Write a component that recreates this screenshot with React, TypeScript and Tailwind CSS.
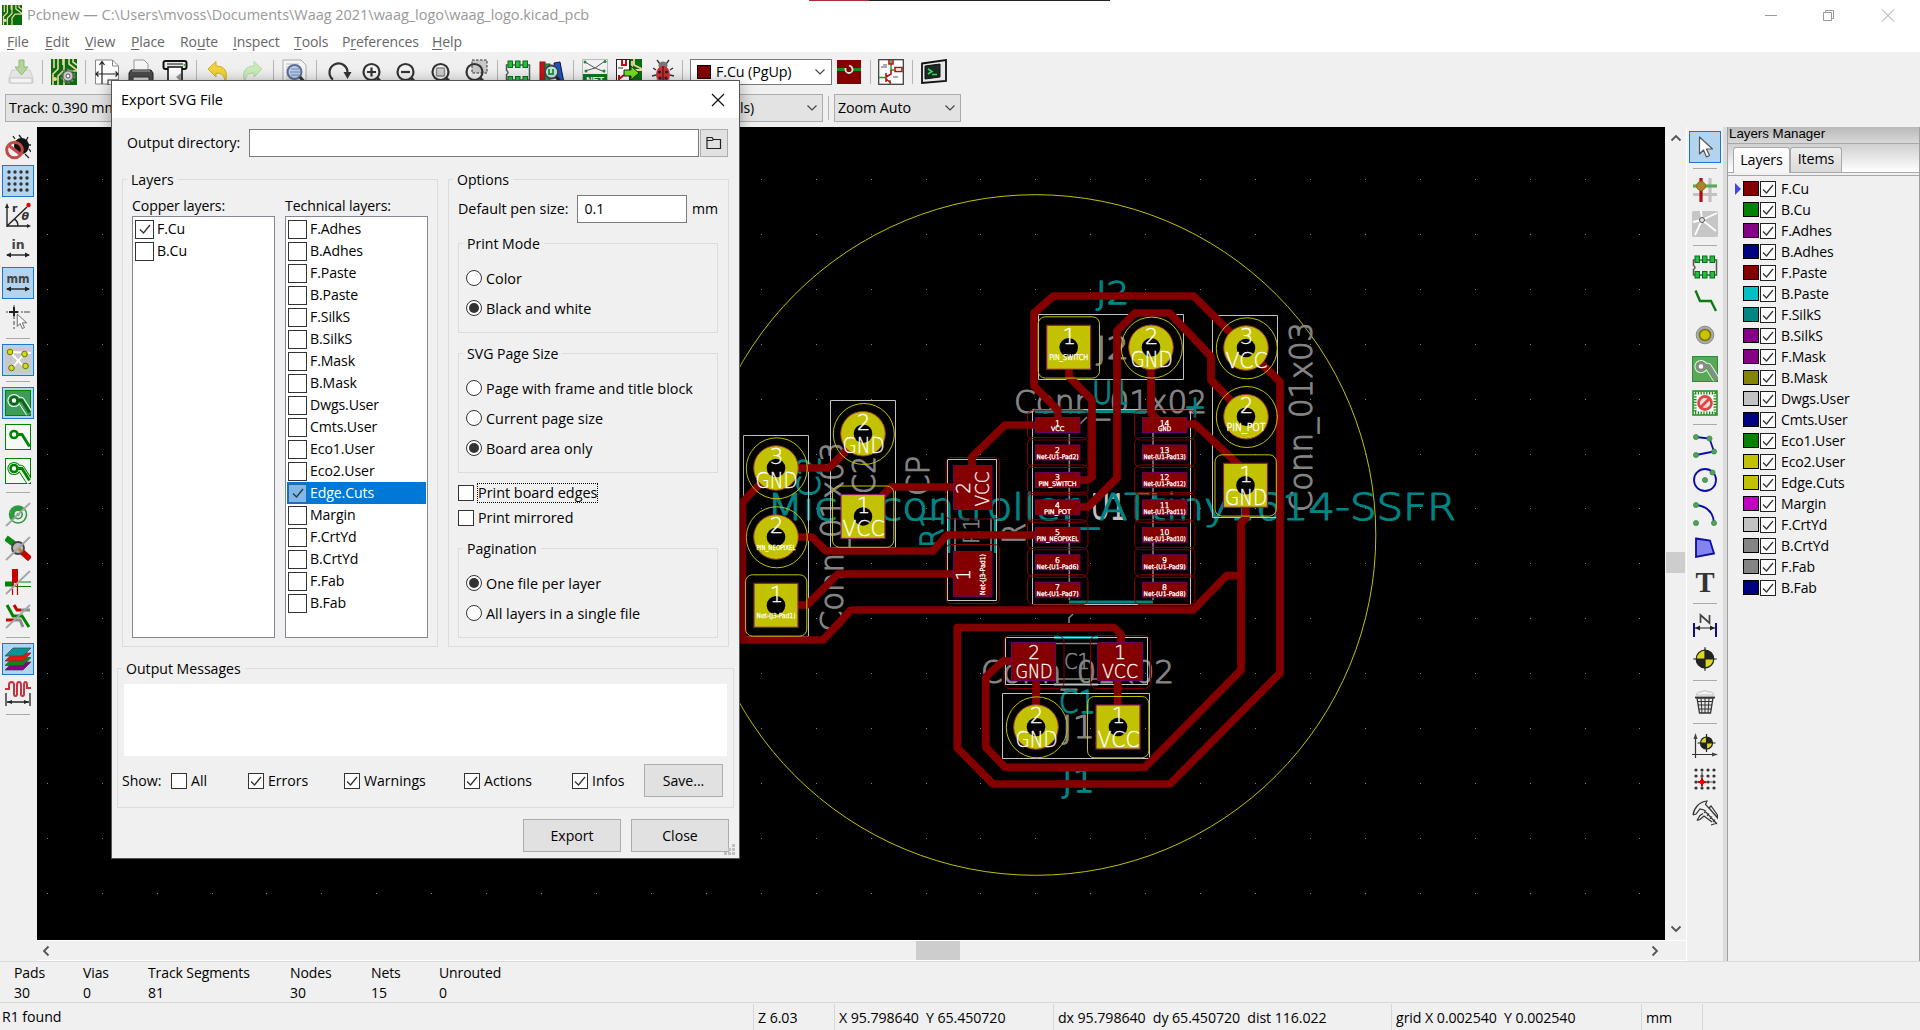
import React from "react";

type Kids = { children?: React.ReactNode };

/* ---------- icon helpers ---------- */
const Ic = ({ children }: Kids) => (
  <svg viewBox="0 0 26 26" className="block h-[26px] w-[26px] shrink-0" fill="none">
    {children}
  </svg>
);
const G = "#008400";

const IcSave = () => (
  <Ic>
    <path d="M4 11h18l3 8v5H1v-5z" fill="#e4e4e4" stroke="#cfcfcf" />
    <path d="M2 19h22v5H2z" fill="#f3f3f3" stroke="#c6c6c6" />
    <path d="M11 1h5v7h4l-6.500 8-6.500-8h4z" fill="#b4d49a" stroke="#94b878" />
  </Ic>
);
const Board = () => (
  <>
    <rect width="26" height="26" fill="#0b6b0f" />
    <path d="M2 26V15l5-5V0M7 26V17l6-6V0M12 0v6M18 0v5l8 6M22 0v3l4 3M13 26v-9l4-5h9M3 0v9" stroke="#e8d9a0" strokeWidth="1.6" />
    <circle cx="4" cy="20" r="2" fill="#e8d9a0" />
  </>
);
const IcBoard = () => (
  <Ic>
    <Board />
    <circle cx="17" cy="17" r="6.500" stroke="#777" strokeWidth="2" strokeDasharray="2.400 1.700" />
    <circle cx="17" cy="17" r="5" fill="#c9c9c9" stroke="#666" />
    <circle cx="17" cy="17" r="2" fill="#fff" stroke="#555" />
  </Ic>
);
const IcPage = () => (
  <Ic>
    <path d="M1.500 1h17l6 6v18h-23z" fill="#fff" stroke="#888" />
    <path d="M18.500 1v6h6" stroke="#888" />
    <path d="M8 3v22M2 15h22M5.500 6L8 2.500 10.500 6M4.500 12.500L2 15l2.500 2.500M21.500 12.500L24 15l-2.500 2.500" stroke="#222" strokeWidth="1.2" />
    <rect x="14" y="21" width="10" height="5" fill="#fff" stroke="#222" />
  </Ic>
);
const IcPrint = () => (
  <Ic>
    <path d="M6 1h10l4 4v8H6z" fill="#f5f5f5" stroke="#999" />
    <path d="M3 11h20l2 3v9H1v-9z" fill="#4b4b4b" stroke="#222" />
    <path d="M4 12h18" stroke="#aaa" />
    <path d="M5 18h16v6H5z" fill="#d6d6d6" stroke="#333" />
  </Ic>
);
const IcPlot = () => (
  <Ic>
    <rect x="1.500" y="2" width="23" height="8" rx="2" fill="#e9e9e9" stroke="#111" strokeWidth="2" />
    <path d="M5 5h16" stroke="#111" />
    <path d="M6 8v16h14V8z" fill="#fff" stroke="#111" strokeWidth="1.600" />
    <path d="M14 18l5-4v9z" fill="#999" />
    <circle cx="22.500" cy="6" r="1" fill="#2a2" />
  </Ic>
);
const IcUndo = ({ redo }: { redo?: boolean }) => (
  <Ic>
    <g transform={redo ? "matrix(-1 0 0 1 26 0)" : undefined}>
      <path
        d="M3 10L11 2.500v4.500c8 0 13 5 9 17 0-7-3-10-9-10v4z"
        fill={redo ? "#c9ecbc" : "#f3d33c"}
        stroke={redo ? "#b0dca2" : "#d3ac24"}
      />
    </g>
  </Ic>
);
const IcFind = () => (
  <Ic>
    <path d="M1 1h18l5 5v19H1z" fill="#f6f6f6" stroke="#aaa" />
    <path d="M4 5h13M4 8h15M4 11h15M4 14h15M4 17h15M4 20h15" stroke="#bbb" />
    <circle cx="12.500" cy="13" r="7" fill="#bdd0ee" stroke="#5a6f93" strokeWidth="2" />
    <path d="M8 13h10M9 10h8M9 16h8" stroke="#7088b5" />
    <path d="M18 18l6 7" stroke="#333" strokeWidth="3" />
  </Ic>
);
const IcRefresh = () => (
  <Ic>
    <path d="M7 20.500A9 9 0 1 1 21.500 14" stroke="#333" strokeWidth="2.200" />
    <path d="M17.500 13h8l-4 7z" fill="#333" />
  </Ic>
);
const IcZoom = ({ kind }: { kind: "in" | "out" | "fit" | "sel" }) => (
  <Ic>
    {kind === "sel" && <rect x="9" y="1" width="15" height="13" fill="#c9c9c9" stroke="#333" strokeDasharray="2.500 1.500" />}
    <circle cx="11.500" cy="13" r="8" fill={kind === "sel" ? "none" : "#f4f4f4"} stroke="#333" strokeWidth="2.200" />
    {kind === "in" && <path d="M7 13h9M11.500 8.500v9" stroke="#333" strokeWidth="2.200" />}
    {kind === "out" && <path d="M7 13h9" stroke="#333" strokeWidth="2.200" />}
    {kind === "fit" && <rect x="7.500" y="9" width="8" height="8" rx="1" fill="#ccc" stroke="#888" strokeWidth="1.400" />}
    <path d="M17 19l6 6" stroke="#333" strokeWidth="3" />
  </Ic>
);
const IcFootprint = () => (
  <Ic>
    <path d="M1.500 6h23v15h-23v-5.500q3-2 0-4z" fill="#ededed" stroke="#555" strokeWidth="1.500" />
    {[3, 10.5, 18].map((x) => (
      <g key={x} fill="#1fbf3c" stroke="#0c6c1c">
        <rect x={x} y="2" width="4.500" height="6.500" />
        <rect x={x} y="17.500" width="4.500" height="6.500" />
      </g>
    ))}
  </Ic>
);
const IcLib = () => (
  <Ic>
    <rect x="1" y="3" width="5" height="22" fill="#c11" stroke="#811" />
    <rect x="6" y="5" width="5" height="20" fill="#2a9d3a" stroke="#164" />
    <path d="M15 4l6-1 4 21-6 1z" fill="#1c55c0" stroke="#114" />
    <circle cx="12.500" cy="13" r="6.500" fill="#bfe3ee" stroke="#444" strokeWidth="1.800" />
    <path d="M10 10v5h4v-5" stroke="#2a9d3a" strokeWidth="2" />
    <path d="M17 18l6 6" stroke="#222" strokeWidth="3" />
  </Ic>
);
const IcNet = () => (
  <Ic>
    <rect x="0.500" y="0.500" width="25" height="25" fill="#f2f2f2" stroke="#bbb" />
    <path d="M3 3l10 6 10-7M3 12l10-3 10 4" stroke="#555" />
    <g fill="#1b8a2b">
      <circle cx="3" cy="3" r="1.500" /><circle cx="23" cy="2.500" r="1.500" /><circle cx="4" cy="12" r="1.500" /><circle cx="22" cy="12" r="1.500" />
    </g>
    <rect x="1" y="15" width="24" height="10" fill="#0b7a24" />
    <text x="13" y="23.500" textAnchor="middle" fontSize="9" fontWeight="700" fill="#fff" fontFamily="Liberation Sans, sans-serif">NET</text>
  </Ic>
);
const IcUpdate = () => (
  <Ic>
    <rect width="26" height="26" fill="#0b6b0f" />
    <rect x="0.500" y="0.500" width="13" height="25" fill="#fff" stroke="#222" />
    <path d="M18 0v6l8 4M16 2v9h10" stroke="#e8d9a0" strokeWidth="1.800" />
    <path d="M6 1v5h4V1M3 25v-9M3 20l5-4" stroke="#b11" strokeWidth="2" />
    <path d="M2 9h5" stroke="#333" />
    <path d="M8 11h7V7l8 7-8 7v-4H8z" fill="#6fe01c" stroke="#222" />
  </Ic>
);
const IcBug = () => (
  <Ic>
    <path d="M10 5L7 1M16 5l3-4M6 11L3 9M20 11l3-2M6 16l-4 1M20 16l4 1M7 21l-3 4M19 21l3 4" stroke="#333" strokeWidth="1.300" />
    <ellipse cx="13" cy="6.500" rx="4.500" ry="4" fill="#777" />
    <ellipse cx="13" cy="15.500" rx="7" ry="8.500" fill="#c8323c" />
    <path d="M13 7v17" stroke="#500" />
    <g fill="#222"><circle cx="9.500" cy="13" r="1.500" /><circle cx="16.500" cy="13" r="1.500" /><circle cx="10" cy="19" r="1.500" /><circle cx="16" cy="19" r="1.500" /></g>
  </Ic>
);
const IcSwap = () => (
  <Ic>
    <rect x="1" y="1" width="24" height="24" fill="#840000" />
    <path d="M1 10.500h8M17 10.500h8" stroke="#1c8a1c" strokeWidth="3" />
    <path d="M9.500 9v1.500a3.500 3.500 0 0 0 7 0q0-3-3.500-4" stroke="#e5e5e5" strokeWidth="1.800" />
  </Ic>
);
const IcSchem = () => (
  <Ic>
    <rect x="0.700" y="0.700" width="24.600" height="24.600" fill="#fff" stroke="#333" strokeWidth="1.200" />
    <path d="M13 1v10M13 11h3M7 18.500H1M12 21v4" stroke="#1c9a1c" strokeWidth="1.500" />
    <path d="M11 1v4h4V1M17 8.500h7v4h-7zM8 14v9M8 18l5-3v-4M8 20l5 4" stroke="#b11" strokeWidth="1.600" />
    <path d="M5 6h4M3 8h6M15 18h5" stroke="#555" />
  </Ic>
);
const IcTerm = () => (
  <Ic>
    <path d="M1 4.500L25 1v21L1 24z" fill="#e8e8e8" stroke="#111" strokeWidth="1.800" />
    <path d="M4 7l15-2v13L4 20z" fill="#1c2b22" stroke="#111" />
    <path d="M7 10l4 2.500L7 15M11 15.500h5" stroke="#2be05a" strokeWidth="1.500" />
  </Ic>
);

/* left toolbar */
const IcDrcOff = () => (
  <Ic>
    <path d="M17 5L14 1M21 7l2-4M23 11h3M24 15l2 3M20 20l4 4M10 5L8 2" stroke="#222" strokeWidth="1.300" />
    <ellipse cx="16.500" cy="12" rx="7.500" ry="8" fill="#111" />
    <circle cx="9.500" cy="16" r="7.800" stroke="#c44a4a" strokeWidth="3" />
    <path d="M4.500 12L15 20" stroke="#c44a4a" strokeWidth="3" />
  </Ic>
);
const IcGrid = () => (
  <Ic>
    {[4, 10, 16, 22].map((x) => [4, 10, 16, 22].map((y) => <circle key={`${x}-${y}`} cx={x} cy={y} r="1.700" fill="#333" />))}
  </Ic>
);
const IcPolar = () => (
  <Ic>
    <path d="M2 25V4M2 24h21M2 24L22 5M9 17q4 2 4 7" stroke="#222" strokeWidth="1.400" />
    <path d="M0 6l2-5 2 5zM22 22l4 2-4 2z" fill="#222" />
    <circle cx="23.500" cy="3" r="2.200" fill="#e00" />
    <text x="7" y="10" fontSize="11" fontWeight="700" fill="#333" fontFamily="DejaVu Sans, sans-serif">r</text>
    <text x="16.500" y="18" fontSize="11" fontStyle="italic" fontWeight="700" fill="#333" fontFamily="DejaVu Sans, sans-serif">θ</text>
  </Ic>
);
const IcUnit = ({ label }: { label: string }) => (
  <Ic>
    <text x="13" y="12.500" textAnchor="middle" fontSize="13" fontWeight="700" fill="#454545" fontFamily="DejaVu Sans, sans-serif" textLength={label === "mm" ? 23 : 13} lengthAdjust="spacingAndGlyphs">{label}</text>
    <path d="M2 19h22" stroke="#222" strokeWidth="1.400" />
    <path d="M1 19l5-2.500v5zM25 19l-5-2.500v5z" fill="#222" />
  </Ic>
);
const Cursor = ({ t }: { t?: string }) => (
  <path transform={t} d="M8 3v17l4-4 3 7 3-1.500-3-6.500h6z" fill="#fff" stroke="#555" strokeWidth="1.200" strokeLinejoin="round" />
);
const IcCross = () => (
  <Ic>
    <path d="M9 1v24" stroke="#999" strokeWidth="2" strokeDasharray="4 2 8 2" />
    <path d="M1 8h24" stroke="#999" strokeWidth="2" strokeDasharray="2 1 10 2" />
    <path d="M9 3v9M4 8h9" stroke="#222" strokeWidth="2" />
    <Cursor t="translate(6.500 8) scale(0.720)" />
  </Ic>
);
const IcRats = () => (
  <Ic>
    <rect width="26" height="26" fill="#c9c9c9" />
    <path d="M5 5l21 1M5 5l15 16M7 21L19 7" stroke="#fff" strokeWidth="2" />
    {[[5, 5], [19.500, 7], [6.500, 21], [20.500, 19]].map(([x, y]) => <circle key={x} cx={x} cy={y} r="2.800" fill="#cfdd12" stroke="#6b7410" />)}
  </Ic>
);
const IcZone = ({ filled, outline }: { filled?: boolean; outline?: boolean }) => {
  const bg = filled ? "#3f9b5a" : "#f7f9f7";
  return (
    <Ic>
      <rect x="0.500" y="0.500" width="25" height="25" fill={bg} stroke={G} />
      {(filled || outline) && (
        <>
          <path d="M11 10.500h5l8.500 13" stroke={filled ? "#fff" : G} strokeWidth="7.500" strokeLinejoin="round" />
          <circle cx="9" cy="10.500" r="6.600" fill={filled ? "#fff" : G} />
          <path d="M11 10.500h5l9 14" stroke={bg} strokeWidth="5.600" strokeLinejoin="round" />
          <circle cx="9" cy="10.500" r="5.600" fill={bg} />
        </>
      )}
      <path d="M11 10.500h6l7.500 12" stroke={filled ? "#0a6a14" : G} strokeWidth="2.800" />
      <circle cx="9" cy="10.500" r="3.500" stroke={filled ? "#0a6a14" : G} strokeWidth="2.600" fill="#fff" />
    </Ic>
  );
};
const Slash = () => <path d="M1 25L25 2" stroke="#a5a5a5" strokeWidth="1.800" />;
const IcPadSk = () => (
  <Ic>
    <circle cx="13" cy="13.500" r="8.500" stroke="#2a9a3c" strokeWidth="1.500" />
    <path d="M7 19.500A8.500 8.500 0 0 1 19 7.500z" fill="#2a9a3c" />
    <circle cx="13" cy="13.500" r="4.200" stroke="#2a9a3c" strokeWidth="1.500" fill="#dfeee2" />
    <circle cx="13" cy="13.500" r="1.500" fill="#2a9a3c" />
    <Slash />
  </Ic>
);
const IcViaSk = () => (
  <Ic>
    <path d="M1 3l8 6" stroke="#0a8a12" strokeWidth="6" />
    <path d="M16 16l9 8" stroke="#c80000" strokeWidth="6" />
    <circle cx="13" cy="13" r="6" fill="#b9b9b9" stroke="#444" strokeWidth="1.800" />
    <path d="M13 13l4 4" stroke="#d07a20" strokeWidth="3" />
    <Slash />
  </Ic>
);
const IcTrackSk = () => (
  <Ic>
    <path d="M0 15h9" stroke={G} strokeWidth="5" />
    <path d="M9 13h17M9 17.500h17" stroke={G} strokeWidth="1.200" />
    <path d="M10 0v14" stroke="#c80000" strokeWidth="6" />
    <path d="M7.500 14v12M12.500 14v12" stroke="#c80000" strokeWidth="1.200" />
    <Slash />
  </Ic>
);
const IcContrast = () => (
  <Ic>
    <path d="M2 2l6 11h9l7 11" stroke={G} strokeWidth="3" />
    <path d="M9 2l3 5h4" stroke="#c80000" strokeWidth="3" />
    <path d="M16 7h9M9 17h6l3 7" stroke="#8a8a8a" strokeWidth="3" />
    <path d="M1 17h8" stroke="#c80000" strokeWidth="3" />
    <Slash />
  </Ic>
);
const IcLayers = () => (
  <Ic>
    {[["#84008a", 16], ["#0a8a12", 11.500], ["#e11", 7], ["#0a9494", 2]].map(([c, y]) => (
      <path key={c as string} d={`M8 ${y}h18l-8 8H0z`} fill={c as string} stroke="#444" strokeWidth="0.700" />
    ))}
  </Ic>
);
const IcMicro = () => (
  <Ic>
    <path d="M0 9h4V5q0-3 2.500-3T9 5v9q0 2 1.500 2T12 14V5q0-3 2-3t2 3v9q0 2 1.500 2t1.500-2V5q0-3 1.500-3T22 5v3h4" stroke="#c8323c" strokeWidth="2" />
    <path d="M1 13v13M25 13v13M2 22h22" stroke="#222" strokeWidth="1.300" />
    <path d="M2 22l5-2v4zM24 22l-5-2v4z" fill="#222" />
  </Ic>
);

/* right toolbar */
const IcHighlight = () => (
  <Ic>
    <path d="M18 1v24M1 17.500h24" stroke="#c2c2c2" strokeWidth="3.200" />
    <path d="M1 9h24" stroke="#5aa85a" strokeWidth="3.200" />
    <path d="M9 1v24" stroke="#b40c0c" strokeWidth="3.200" />
    <circle cx="9" cy="9" r="4.500" fill="#a8872c" stroke="#8a6e1e" />
  </Ic>
);
const IcLocalRats = () => (
  <Ic>
    <rect width="26" height="26" rx="1.500" fill="#c6c6c6" />
    <path d="M10 9L3 24M10 9L1 11M10 9L9 0M10 9l15-7M10 9l14 11" stroke="#fff" strokeWidth="1.800" />
    <circle cx="10" cy="9" r="2.500" fill="#e2e2e2" stroke="#555" />
  </Ic>
);
const IcTrack = () => <Ic><path d="M3.500 2.500l4.500 10.500h11l5 10" stroke="#0a7d12" strokeWidth="2.400" /></Ic>;
const IcVia = () => (
  <Ic>
    <circle cx="13" cy="13" r="8.800" fill="#a9a9a9" stroke="#8d8d8d" />
    <circle cx="13" cy="13" r="5.500" fill="#c9c400" stroke="#77730a" strokeWidth="1.500" />
  </Ic>
);
const IcAddZone = () => (
  <Ic>
    <rect x="0.500" y="0.500" width="25" height="25" fill="#58a858" stroke="#2c8a3c" />
    <path d="M11 10.500h5l8.500 13" stroke="#e8f4e8" strokeWidth="7.500" strokeLinejoin="round" />
    <circle cx="9" cy="10.500" r="6.600" fill="#e8f4e8" />
    <path d="M11 10.500h5l9 14" stroke="#58a858" strokeWidth="5.600" strokeLinejoin="round" />
    <circle cx="9" cy="10.500" r="5.600" fill="#58a858" />
    <path d="M11 10.500h6l7.500 13" stroke="#8a8a8a" strokeWidth="3.200" />
    <circle cx="9" cy="10.500" r="3.600" stroke="#8a8a8a" strokeWidth="2.600" fill="#fff" />
  </Ic>
);
const IcKeepout = () => (
  <Ic>
    <rect x="1" y="1" width="24" height="24" fill="#e9f5e9" stroke="#1d8a1d" strokeWidth="1.500" />
    <rect x="3" y="3" width="20" height="20" stroke="#1d8a1d" strokeWidth="3" strokeDasharray="1.200 1.600" />
    <rect x="5" y="5" width="16" height="16" fill="#fff" />
    <circle cx="13" cy="13" r="6.500" fill="#f8dcdc" stroke="#dc4848" strokeWidth="2.800" />
    <path d="M9 17l8-8" stroke="#dc4848" strokeWidth="2.800" />
  </Ic>
);
const Dots = ({ p }: { p: number[][] }) => <>{p.map(([x, y]) => <circle key={`${x},${y}`} cx={x} cy={y} r="2.600" fill="#4fa35a" stroke="#2e7c3c" strokeWidth="0.600" />)}</>;
const IcLine = () => <Ic><path d="M4 4l13.500 1.500L22 18.500 4 22" stroke="#0b0bab" strokeWidth="1.800" /><Dots p={[[4, 4], [17.500, 5.500], [22, 18.500], [4, 22]]} /></Ic>;
const IcCircle = () => <Ic><circle cx="13" cy="13" r="11" stroke="#0b0bab" strokeWidth="1.800" /><Dots p={[[13, 13], [20.500, 5.500]]} /></Ic>;
const IcArc = () => <Ic><path d="M4 4q17 2 18 18" stroke="#0b0bab" strokeWidth="1.800" /><Dots p={[[4, 4], [4, 22], [22, 22]]} /></Ic>;
const IcPoly = () => <Ic><path d="M4 3.500l14 2 4 13L4 22z" fill="#8484f0" stroke="#0b0bab" strokeWidth="1.800" /></Ic>;
const IcText = () => (
  <Ic><text x="13" y="22.500" textAnchor="middle" fontSize="29" fontWeight="700" fill="#333" fontFamily="Liberation Serif, serif" textLength="19" lengthAdjust="spacingAndGlyphs">T</text></Ic>
);
const IcDim = () => (
  <Ic>
    <path d="M2 11v14M24 11v14" stroke="#0b0b94" strokeWidth="2" />
    <path d="M3 16h20" stroke="#222" />
    <path d="M3 16l5-2.500v5zM23 16l-5-2.500v5z" fill="#222" />
    <path d="M8.500 11V3l9 8V3" stroke="#444" strokeWidth="1.700" />
  </Ic>
);
const Target = ({ x, y, r }: { x: number; y: number; r: number }) => (
  <g transform={`translate(${x} ${y})`}>
    <circle r={r} fill="#dcd81c" stroke="#222" strokeWidth="1.200" />
    <path d={`M0 0V${-r}A${r} ${r} 0 0 1 ${r} 0zM0 0V${r}A${r} ${r} 0 0 1 ${-r} 0z`} fill="#222" />
    <path d={`M0 ${-r - 3}V${r + 3}M${-r - 3} 0H${r + 3}`} stroke="#222" strokeWidth="1.200" />
  </g>
);
const IcTarget = () => <Ic><Target x={13} y={13} r={8.800} /></Ic>;
const IcTrash = () => (
  <Ic>
    <path d="M4 6q2-4 5-3 4-3 7 0 5-1 6 3z" fill="#f5f5f5" stroke="#bdbdbd" />
    <path d="M3 8.500h20" stroke="#333" strokeWidth="1.800" />
    <path d="M5 9l2.500 15h11L21 9z" fill="#e9e9e9" stroke="#333" strokeWidth="1.300" />
    <path d="M9 9l1 15M13 9v15M17 9l-1 15M5.500 12.500h15M6 16h14M7 20h12.500" stroke="#333" />
  </Ic>
);
const IcOrigin = () => (
  <Ic>
    <path d="M3.500 26V5M0 22.500h22" stroke="#333" strokeWidth="1.200" />
    <path d="M1.500 7l2-6 2 6zM20 20.500l6 2-6 2z" fill="#444" />
    <Target x={14.500} y={11} r={6} />
  </Ic>
);
const IcGridOrigin = () => (
  <Ic>
    {[4, 10, 16, 22].map((x) => [4, 10, 16, 22].map((y) => <circle key={`${x}-${y}`} cx={x} cy={y} r="1.600" fill="#333" />))}
    <path d="M10 6v15M5 16h15" stroke="#555" strokeWidth="1.200" />
    <path d="M10 12v8M6 16h8" stroke="#c80000" strokeWidth="2" />
    <circle cx="10" cy="16" r="2.400" fill="#e00" />
  </Ic>
);
const IcMeasure = () => (
  <Ic>
    <path d="M1 15C2 8 7 2 15 1l-1.500 3.500L25 17M1 15l3-1 4-5 4 1 13 14M5 20.500l3-1 4-3.500 8 6M5 20.500l3-5 3-2M17 8l2-2 6.500 9v3L17 8M12 13l2-2.500M15 16l2-2.500M18 19l2-2.500M21 22l2-2.500M19 25l6-2" stroke="#333" strokeWidth="1.200" />
  </Ic>
);

/* ---------- generic widgets ---------- */
const VSep = ({ w }: { w: string }) => <div className={`flex h-[26px] shrink-0 items-center justify-center ${w}`}><div className="h-6 w-px bg-[#b5b5b5]" /></div>;
const Chevron = () => (
  <svg viewBox="0 0 12 8" className="h-[8px] w-[12px]" fill="none"><path d="M1.500 1.500L6 6l4.500-4.500" stroke="#444" strokeWidth="1.200" /></svg>
);
const ToolBtn = ({ on, children }: Kids & { on?: boolean }) => (
  <div className="flex h-[34px] shrink-0 items-center justify-center">
    <div className={on ? "flex h-8 w-8 items-center justify-center border border-[#1a78cc] bg-[#b3d4ee]" : "flex h-8 w-8 items-center justify-center"}>{children}</div>
  </div>
);
const HSep = () => <div className="flex h-[9px] shrink-0 items-center justify-center"><div className="h-px w-6 bg-[#a9a9a9]" /></div>;

const Tick = () => (
  <svg viewBox="0 0 14 14" className="h-[14px] w-[14px]" fill="none"><path d="M2 7.500L5.500 11l6.500-8" stroke="#333" strokeWidth="1.300" /></svg>
);
const Box = ({ on }: { on?: boolean }) => (
  <span className="flex h-4 w-4 shrink-0 items-center justify-center border border-[#333] bg-white">{on && <Tick />}</span>
);
const Check = ({ on, label, className = "" }: { on?: boolean; label: string; className?: string }) => (
  <div className={`flex items-center ${className}`}><Box on={on} /><span className="ml-1">{label}</span></div>
);
const Radio = ({ on, label }: { on?: boolean; label: string }) => (
  <div className="flex h-[30px] items-center text-[14.4px] tracking-normal">
    <span className="flex h-4 w-4 items-center justify-center rounded-full border border-[#333] bg-white">{on && <span className="h-[10px] w-[10px] rounded-full bg-[#333]" />}</span>
    <span className="ml-1 mt-px">{label}</span>
  </div>
);
const Group = ({ title, className, children }: Kids & { title: string; className: string }) => (
  <fieldset className={`min-w-0 border border-[#dcdcdc] ${className}`}>
    <legend className="ml-1 h-5 px-1 leading-[22px]">{title}</legend>
    {children}
  </fieldset>
);
const ListRow = ({ name, on, sel }: { name: string; on?: boolean; sel?: boolean }) => (
  <div className={sel ? "mr-px flex h-[22px] items-center bg-[#0078d7] pl-px text-white" : "mr-px flex h-[22px] items-center pl-px"}>
    <span className={sel ? "flex h-[19px] w-[19px] items-center justify-center border border-[#2b68a8] bg-[#7cb8ea]" : "flex h-[19px] w-[19px] items-center justify-center border border-[#333] bg-white"}>{on && <Tick />}</span>
    <span className="ml-[3px] tracking-[-0.1px]">{name}</span>
  </div>
);
const Button = ({ label, className }: { label: string; className: string }) => (
  <div className={`flex h-[33px] items-center justify-center border border-[#adadad] bg-[#e1e1e1] ${className}`}>{label}</div>
);

/* ---------- export dialog ---------- */
const techLayers = ["F.Adhes", "B.Adhes", "F.Paste", "B.Paste", "F.SilkS", "B.SilkS", "F.Mask", "B.Mask", "Dwgs.User", "Cmts.User", "Eco1.User", "Eco2.User", "Edge.Cuts", "Margin", "F.CrtYd", "B.CrtYd", "F.Fab", "B.Fab"];

const ExportDialog = () => (
  <div className="absolute left-[111px] top-[80px] flex h-[779px] w-[629px] flex-col border border-[#555] bg-[#f0f0f0] text-[14.1px] tracking-normal text-black shadow-[0_2px_14px_rgba(0,0,0,0.35)]">
    <div className="flex h-[37px] shrink-0 items-center justify-between bg-white pl-[9px] pr-[14px] text-[14.5px]">
      <span>Export SVG File</span>
      <svg viewBox="0 0 14 14" className="h-[14px] w-[14px]"><path d="M1 1l12 12M13 1L1 13" stroke="#111" strokeWidth="1.200" /></svg>
    </div>
    <div className="mt-[11px] flex h-7 items-center pl-[15px]">
      <span className="w-[122px]">Output directory:</span>
      <div className="h-7 w-[450px] border border-[#7a7a7a] bg-white" />
      <div className="ml-px flex h-7 w-7 items-center justify-center border border-[#adadad] bg-[#e1e1e1]">
        <svg viewBox="0 0 16 14" className="h-[14px] w-4" fill="none"><path d="M1 12.500V1.500h5L7.500 3.500H14.500v9zM1 4.500h5l1.500-1" stroke="#222" strokeWidth="1.200" /></svg>
      </div>
    </div>
    <div className="mt-3 flex h-[478px] gap-[10px] pl-[10px]">
      <Group title="Layers" className="w-[316px]">
        <div className="mt-[7px] flex gap-[10px] pl-[9px]">
          <div className="w-[143px]">
            <div className="h-5 leading-5 tracking-[-0.1px]">Copper layers:</div>
            <div className="h-[422px] border border-[#828790] bg-white py-px pl-px">
              <ListRow name="F.Cu" on />
              <ListRow name="B.Cu" />
            </div>
          </div>
          <div className="w-[143px]">
            <div className="h-5 leading-5 tracking-[-0.1px]">Technical layers:</div>
            <div className="h-[422px] border border-[#828790] bg-white py-px pl-px">
              {techLayers.map((n) => <ListRow key={n} name={n} on={n === "Edge.Cuts"} sel={n === "Edge.Cuts"} />)}
            </div>
          </div>
        </div>
      </Group>
      <Group title="Options" className="w-[281px]">
        <div className="flex flex-col pl-[9px] pr-[10px]">
          <div className="mt-[6px] flex h-7 items-center">
            <span className="w-[120px] text-[14.3px]">Default pen size:</span>
            <div className="flex h-7 w-[110px] items-center border border-[#7a7a7a] bg-white pl-[6px]">0.1</div>
            <span className="ml-[5px]">mm</span>
          </div>
          <Group title="Print Mode" className="mt-[10px] h-[100px]">
            <div className="pl-[7px] pt-[10px]"><Radio label="Color" /><Radio label="Black and white" on /></div>
          </Group>
          <Group title="SVG Page Size" className="mt-[10px] h-[130px]">
            <div className="pl-[7px] pt-[10px]"><Radio label="Page with frame and title block" /><Radio label="Current page size" /><Radio label="Board area only" on /></div>
          </Group>
          <div className="mt-[7px] flex h-[25px] items-center text-[14.4px]">
            <Box /><span className="ml-[3px] border border-dotted border-black leading-[18px]">Print board edges</span>
          </div>
          <Check label="Print mirrored" className="h-[25px] text-[14.3px]" />
          <Group title="Pagination" className="mt-[8px] h-[100px]">
            <div className="pl-[7px] pt-[10px]"><Radio label="One file per layer" on /><Radio label="All layers in a single file" /></div>
          </Group>
        </div>
      </Group>
    </div>
    <Group title="Output Messages" className="ml-[5px] mt-[11px] h-[150px] w-[617px]">
      <div className="ml-[6px] mt-[6px] h-[72px] w-[603px] bg-white" />
      <div className="mt-2 flex h-[33px] items-center pl-1">
        <span className="w-[49px]">Show:</span>
        <Check label="All" className="w-[77px]" />
        <Check label="Errors" on className="w-24" />
        <Check label="Warnings" on className="w-[120px]" />
        <Check label="Actions" on className="w-[108px]" />
        <Check label="Infos" on className="w-[72px]" />
        <Button label="Save..." className="w-[79px]" />
      </div>
    </Group>
    <div className="mt-[11px] flex gap-[10px] pl-[411px]">
      <Button label="Export" className="w-[98px]" />
      <Button label="Close" className="w-[98px]" />
    </div>
    <svg viewBox="0 0 12 12" className="absolute bottom-[2px] right-[3px] h-3 w-3"><path d="M8 0h3v3H8zM4 4h3v3H4zM8 4h3v3H8zM0 8h3v3H0zM4 8h3v3H4zM8 8h3v3H8z" fill="#c0c0c0" /></svg>
  </div>
);

/* ---------- board ---------- */
type LabelProps = { x: number; y: number; s: number; w?: number; c?: string; rot?: boolean; mid?: boolean; b?: number; children: string };
const Label = ({ x, y, s, w, c = "#fff", rot, mid, b = 0, children }: LabelProps) => (
  <text
    x={x} y={y} fontSize={s * 0.975} fill={c} fontWeight={200} textAnchor={mid ? "middle" : "start"}
    stroke={b ? c : "none"} strokeWidth={b} strokeLinejoin="round"
    textLength={w} lengthAdjust="spacingAndGlyphs" fontFamily="DejaVu Sans Light, DejaVu Sans, sans-serif"
    transform={rot ? `rotate(-90 ${x} ${y})` : undefined}
  >{children}</text>
);
const TEAL = "#008484";
const GRAY = "#848484";
const YEL = "#c2c200";

const tracks = [
  "M758 486L742.500 502V640H823L851 610H1193L1226.500 575.700H1241",
  "M798 468H829L863 434",
  "M863 516L891 487H960",
  "M776 537H812L826 551H933L947 535H1040",
  "M776 605H807L838 574H960",
  "M972 467V457L1005 425H1040",
  "M1057.700 422V410L1034 386V313L1053.500 296H1193.500L1246 348",
  "M1263 365L1280 382V673L1170 784H993L957.300 748V627.500H1114L1121 634V648",
  "M1069 365V376.700L1092 400V477L1088 480H1075",
  "M1075 507H1088L1117 478V331L1135 313H1169.500L1211 356.500V380L1240 410",
  "M1151 365V413L1162 424",
  "M1187 424H1195L1240 466",
  "M1245.700 505V518L1241 523V670L1145 767.300H1005L985.700 747V677L1003 661H1017",
  "M1036 678V707",
  "M1117.700 678V707",
];
type Pad = { x: number; y: number; n: string; net: string; sq?: boolean; small?: number };
const pads: Pad[] = [
  { x: 776, y: 468, n: "3", net: "GND" },
  { x: 776, y: 537, n: "2", net: "PIN_NEOPIXEL", small: 7 },
  { x: 776, y: 605.300, n: "1", net: "Net-(J3-Pad1)", sq: true, small: 7 },
  { x: 863, y: 433.700, n: "2", net: "GND" },
  { x: 863, y: 516.500, n: "1", net: "VCC", sq: true },
  { x: 1068.700, y: 347.300, n: "1", net: "PIN_SWITCH", sq: true, small: 8 },
  { x: 1151, y: 347.300, n: "2", net: "GND" },
  { x: 1246, y: 348, n: "3", net: "VCC" },
  { x: 1246, y: 416.700, n: "2", net: "PIN_POT", small: 10 },
  { x: 1245.500, y: 485.300, n: "1", net: "GND", sq: true },
  { x: 1036, y: 727, n: "2", net: "GND" },
  { x: 1118, y: 727, n: "1", net: "VCC", sq: true },
];
const icLeft = ["VCC", "Net-(U1-Pad2)", "PIN_SWITCH", "PIN_POT", "PIN_NEOPIXEL", "Net-(U1-Pad6)", "Net-(U1-Pad7)"];
const icRight = ["GND", "Net-(U1-Pad13)", "Net-(U1-Pad12)", "Net-(U1-Pad11)", "Net-(U1-Pad10)", "Net-(U1-Pad9)", "Net-(U1-Pad8)"];
const netWidth = (s: string) => (s.length < 4 ? 13 : s.length < 8 ? 27 : s.length < 11 ? 38 : 42);

const BoardCanvas = () => (
  <svg viewBox="37 127 1628 813" className="block h-[813px] w-[1628px] bg-black" fill="none">
    {Array.from({ length: 30 }, (_, i) =>
      Array.from({ length: 14 }, (_, j) => <rect key={`${i}-${j}`} x={Math.round(46.800 + i * 54.920)} y={Math.round(178.900 + j * 54.920)} width="1" height="1" fill="#848484" />)
    )}
    <circle cx="1035.500" cy="535" r="340.300" stroke={YEL} />

    {/* fabrication text and outlines */}
    <Label x={843} y={632} s={32} w={190} c={GRAY} b={1.100} rot>Conn_01x03</Label>
    <Label x={875} y={494} s={33} w={38} c={GRAY} b={1.100} rot>C2</Label>
    <Label x={929} y={496} s={33} w={40} c={GRAY} b={1.100} rot>CP</Label>
    <Label x={979} y={544} s={22} w={26} c={GRAY} b={0.600} rot>R1</Label>
    <Label x={1025} y={544} s={33} w={21} c={GRAY} b={1.100} rot>R</Label>
    <Label x={1096} y={359} s={33} w={33} c={GRAY} b={1.100}>J2</Label>
    <Label x={1014} y={413} s={32} w={193} c={GRAY} b={1.100}>Conn_01x02</Label>
    <Label x={1312} y={512} s={32} w={190} c={GRAY} b={1.100} rot>Conn_01x03</Label>
    <Label x={981} y={683} s={32} w={193} c={GRAY} b={1.100}>Conn_01x02</Label>
    <Label x={1064} y={668.500} s={22} w={26} c={GRAY} b={0.600}>C1</Label>
    <Label x={1062} y={737.500} s={33} w={33} c={GRAY} b={1.100}>J1</Label>
    <Label x={1091} y={519} s={34} w={35} c="#c2c2c2" b={1.800}>U1</Label>
    <path d="M955 518V551M991 518V551M1055 643.500H1097M1055 679H1097M1069.300 434V600M1153 412V600M1080 424L1087 417M1069 623V618L1073 614" stroke={GRAY} strokeWidth="1.600" />

    {/* silkscreen */}
    <Label x={820} y={497} s={33} w={41} c={TEAL} b={1.300} rot>C2</Label>
    <Label x={943} y={548} s={33} w={38} c={TEAL} b={1.300} rot>R1</Label>
    <Label x={1096} y={304} s={33} w={33} c={TEAL} b={1.300}>J2</Label>
    <Label x={1092} y={404} s={33} w={38} c={TEAL} b={1.300}>U1</Label>
    <Label x={1184} y={417} s={30} w={22} c={TEAL} b={1.300}>+</Label>
    <Label x={1059} y={713} s={33} w={37} c={TEAL} b={1.300}>C1</Label>
    <Label x={1062} y={792} s={33} w={33} c={TEAL} b={1.300}>J1</Label>
    <Label x={767} y={519.500} s={39} w={689} c={TEAL} b={1.200}>Microcontroller_ATtiny1614-SSFR</Label>
    <path d="M948.700 515V553M995.500 515V553M1035 411.500H1153M1069 602H1153M1054 637.500H1098M1054 684.500H1098" stroke={TEAL} strokeWidth="3.200" />

    {/* courtyards */}
    <path d="M743.500 435.500H808.500V636.500H743.500zM830.500 400.500H895.500V547.500H830.500zM947.500 459.500H996.500V600.500H947.500zM1038.500 314.500H1183.500V379.500H1038.500zM1212.500 315.500H1277.500V517.500H1212.500zM1032.500 409.500H1190.500V604.500H1032.500zM1005.500 637.500H1147.500V684.500H1005.500zM1002.500 693.500H1149.500V758.500H1002.500z" stroke="#c2c2c2" />

    {/* copper */}
    {tracks.map((d) => <path key={d} d={d} stroke="#840000" strokeWidth="7.700" strokeLinejoin="round" strokeLinecap="round" />)}

    {pads.map((p) => (
      <g key={`${p.x}-${p.y}`}>
        {p.sq ? (
          <>
            <rect x={p.x - 30.500} y={p.y - 30.500} width="61.300" height="61.300" rx="7" stroke={YEL} />
            <rect x={p.x - 22} y={p.y - 22} width="44" height="44" fill={YEL} stroke="#84205a" strokeWidth="1.200" />
          </>
        ) : (
          <>
            <circle cx={p.x + 0.800} cy={p.y + 0.300} r="30.500" stroke={YEL} />
            <circle cx={p.x} cy={p.y} r="22.300" fill={YEL} stroke="#a03a3a" />
          </>
        )}
        <circle cx={p.x} cy={p.y} r="9.300" fill="#000" />
        <Label x={p.x + 0.500} y={p.y - 3.700} s={22} b={0.300} mid>{p.n}</Label>
        {p.small
          ? <Label x={p.x} y={p.y + (p.small > 9 ? 14 : 13)} s={p.small} w={39} b={0.400} mid>{p.net}</Label>
          : <Label x={p.x + 0.500} y={p.y + 19.600} s={22} w={42} b={0.300} mid>{p.net}</Label>}
      </g>
    ))}

    {/* U1 */}
    {[...icLeft, ...icRight].map((net, i) => {
      const right = i > 6;
      const k = right ? i - 7 : i;
      const cx = right ? 1164.500 : 1057.500;
      const cy = 425 + k * 27.450;
      return (
        <g key={i}>
          <rect x={cx - 30} y={cy - 15} width="60.500" height="30" rx="6" stroke="#840000" />
          <rect x={cx - 22} y={cy - 7.500} width="44.500" height="15" fill="#840000" stroke="#6a0068" />
          <Label x={cx} y={cy + 0.500} s={8} b={0.400} mid>{String(right ? 14 - k : k + 1)}</Label>
          <Label x={cx} y={cy + 6.300} s={6.500} w={netWidth(net)} b={0.500} mid>{net}</Label>
        </g>
      );
    })}

    {/* R1 */}
    <path d="M951 457.500H994Q999.500 457.500 999.500 463V514Q999.500 519 994 519H951Q946 519 946 514V463Q946 457.500 951 457.500zM951 544.500H994Q999.500 544.500 999.500 550V598Q999.500 603.500 994 603.500H951Q946 603.500 946 598V550Q946 544.500 951 544.500z" stroke="#840000" />
    <path d="M953.500 465.500H992V509.500H953.500zM953.500 551.500H992V596.500H953.500z" fill="#840000" stroke="#6a0068" />
    <Label x={970} y={488} s={19} b={0.300} rot mid>2</Label>
    <Label x={989} y={489} s={19} w={35} b={0.300} rot mid>VCC</Label>
    <Label x={970} y={575} s={19} b={0.300} rot mid>1</Label>
    <Label x={984.500} y={574.500} s={7} w={41} b={0.500} rot mid>Net-(J3-Pad1)</Label>

    {/* C1 */}
    <rect x="1004" y="635.500" width="60" height="53" rx="6" stroke="#840000" />
    <rect x="1090.500" y="635.500" width="60" height="53" rx="6" stroke="#840000" />
    <path d="M1011.500 642.500H1055.500V680.500H1011.500zM1097.500 642.500H1142.500V680.500H1097.500z" fill="#840000" stroke="#6a0068" />
    <Label x={1034} y={659} s={19} b={0.300} mid>2</Label>
    <Label x={1034} y={677.500} s={19} w={37} b={0.300} mid>GND</Label>
    <Label x={1120} y={659} s={19} b={0.300} mid>1</Label>
    <Label x={1120} y={677.500} s={19} w={36} b={0.300} mid>VCC</Label>
  </svg>
);

/* ---------- layers manager ---------- */
const layers: [string, string][] = [
  ["F.Cu", "#840000"], ["B.Cu", "#008400"], ["F.Adhes", "#840084"], ["B.Adhes", "#000084"], ["F.Paste", "#840000"],
  ["B.Paste", "#00c2c2"], ["F.SilkS", "#008484"], ["B.SilkS", "#840084"], ["F.Mask", "#840084"], ["B.Mask", "#848400"],
  ["Dwgs.User", "#c2c2c2"], ["Cmts.User", "#000084"], ["Eco1.User", "#008400"], ["Eco2.User", "#c2c200"], ["Edge.Cuts", "#c2c200"],
  ["Margin", "#c200c2"], ["F.CrtYd", "#c2c2c2"], ["B.CrtYd", "#848484"], ["F.Fab", "#848484"], ["B.Fab", "#000084"],
];
const LayersPanel = () => (
  <div className="flex w-[193px] shrink-0 flex-col border-l border-r border-[#a0a0a0] bg-[#f0f0f0]">
    <div className="h-4 bg-linear-to-b from-[#b9b9b9] to-[#d8d8d8] pl-px font-['Liberation_Sans',sans-serif] text-[13.3px] leading-[13px] tracking-normal text-black">Layers Manager</div>
    <div className="flex h-[30px] items-end border-y border-[#a8a8a8] bg-linear-to-b from-[#d0d0d0] to-white pl-[5px] text-black">
      <div className="-mb-px flex h-[26px] w-[57px] items-center justify-center rounded-t-[3px] border border-b-0 border-[#a8a8a8] bg-linear-to-b from-white to-[#f4f4f4] pb-[2px] text-[14.300px]">Layers</div>
      <div className="flex h-[25px] w-[52px] items-center justify-center rounded-t-[3px] border border-b-0 border-[#a8a8a8] bg-linear-to-b from-[#efefef] to-[#dadada] pb-[2px] text-[14.300px]">Items</div>
    </div>
    <div className="mt-[2px] border-t border-[#a8a8a8] pt-[2px]">
      {layers.map(([n, c], i) => (
        <div key={n} className="flex h-[21px] items-center pl-[7px]">
          <svg viewBox="0 0 6 12" className="h-3 w-[6px]">{i === 0 && <path d="M0 0l6 6-6 6z" fill="#4646e6" />}</svg>
          <span className="ml-[2px] h-[15px] w-4 border border-black" style={{ backgroundColor: c }} />
          <span className="ml-px flex h-4 w-4 items-center justify-center border border-[#222] bg-white"><Tick /></span>
          <span className="ml-[5px] text-black">{n}</span>
        </div>
      ))}
    </div>
  </div>
);

/* ---------- main window ---------- */
const menus: [string, string, string, string][] = [
  ["", "F", "ile", "w-[38px]"], ["", "E", "dit", "w-10"], ["", "V", "iew", "w-[46px]"], ["", "P", "lace", "w-[49px]"], ["Ro", "u", "te", "w-[53px]"],
  ["", "I", "nspect", "w-[61px]"], ["", "T", "ools", "w-[48px]"], ["P", "r", "eferences", "w-[90px]"], ["", "H", "elp", "w-[50px]"],
];
const stats: [string, string, string][] = [
  ["Pads", "30", "w-[69px]"], ["Vias", "0", "w-[65px]"], ["Track Segments", "81", "w-[142px]"], ["Nodes", "30", "w-[81px]"], ["Nets", "15", "w-[68px]"], ["Unrouted", "0", "w-[90px]"],
];

export default function App() {
  return (
    <div className="relative flex h-[1030px] w-[1920px] flex-col overflow-hidden bg-[#f0f0f0] font-['Open_Sans','Noto_Sans',sans-serif] text-[14px] leading-[18px] tracking-[-0.1px] text-[#111]">
      <div className="absolute left-[809px] top-0 flex h-px w-[301px]"><div className="w-[60px] bg-[#b02a37]" /><div className="flex-1 bg-[#222]" /></div>

      <div className="flex h-[30px] shrink-0 items-center bg-white pl-[2px] text-[#999]">
        <svg viewBox="0 0 26 26" className="h-5 w-5" fill="none"><Board /></svg>
        <span className="ml-[5px] flex-1 text-[14.5px] tracking-[-0.03px]">Pcbnew — C:\Users\mvoss\Documents\Waag 2021\waag_logo\waag_logo.kicad_pcb</span>
        <svg viewBox="0 0 134 14" className="mr-[23px] h-[14px] w-[134px]" fill="none" stroke="#999">
          <path d="M2 7.500h12M60.500 4.500h8v8h-8zM62.500 4V2.500h8v8H69M119 1.500l12 12M131 1.500l-12 12" />
        </svg>
      </div>

      <div className="flex h-[22px] shrink-0 items-center bg-white pl-[7px] pt-px text-[#666]">
        {menus.map(([a, u, b, w]) => (
          <span key={u + b} className={w}>{a}<span className="underline underline-offset-2">{u}</span>{b}</span>
        ))}
      </div>

      <div className="flex h-[40px] shrink-0 items-center pl-2">
        <IcSave /><VSep w="w-[17px]" /><IcBoard /><VSep w="w-[17px]" /><IcPage />
        <div className="ml-2"><IcPrint /></div><div className="ml-2"><IcPlot /></div><VSep w="w-[17px]" />
        <IcUndo /><div className="ml-2"><IcUndo redo /></div><VSep w="w-[17px]" /><IcFind /><VSep w="w-[17px]" />
        <div className="ml-px flex gap-2"><IcRefresh /><IcZoom kind="in" /><IcZoom kind="out" /></div><div className="ml-[9px] flex gap-2"><IcZoom kind="fit" /><IcZoom kind="sel" /></div>
        <VSep w="w-4" /><IcFootprint /><div className="ml-2"><IcLib /></div><VSep w="w-[17px]" />
        <div className="flex gap-2"><IcNet /><IcUpdate /><IcBug /></div><VSep w="w-[13px]" />
        <div className="ml-px flex h-[26px] w-[142px] items-center border border-[#7a7a7a] bg-white pl-[6px] pr-[5px] text-[14.3px] text-black">
          <span className="h-[14px] w-[14px] border border-black bg-[#840000]" /><span className="ml-[5px] flex-1">F.Cu (PgUp)</span><Chevron />
        </div>
        <div className="ml-1"><IcSwap /></div><VSep w="w-4" /><IcSchem /><VSep w="w-[17px]" /><IcTerm />
      </div>

      <div className="flex h-[35px] shrink-0 items-center pb-[3px] pl-[5px] text-black">
        <div className="flex h-7 w-[150px] items-center border border-[#adadad] bg-[#e3e3e3] pl-[3px] text-[14.300px]">Track: 0.390 mm</div>
        <div className="ml-[420px] flex h-7 w-[248px] items-center justify-end border border-[#adadad] bg-[#e3e3e3] pr-1"><span className="mr-[52px]">ls)</span><Chevron /></div>
        <VSep w="w-[11px]" />
        <div className="flex h-7 w-[127px] items-center justify-between border border-[#adadad] bg-[#e3e3e3] pl-[3px] pr-1 text-[14.300px]"><span>Zoom Auto</span><Chevron /></div>
      </div>

      <div className="flex h-[834px] shrink-0">
        <div className="flex w-[37px] shrink-0 flex-col pr-px pt-[3px]">
          <ToolBtn><IcDrcOff /></ToolBtn><ToolBtn on><IcGrid /></ToolBtn><ToolBtn><IcPolar /></ToolBtn><ToolBtn><IcUnit label="in" /></ToolBtn>
          <ToolBtn on><IcUnit label="mm" /></ToolBtn><ToolBtn><IcCross /></ToolBtn><HSep /><ToolBtn on><IcRats /></ToolBtn><HSep />
          <ToolBtn on><IcZone filled /></ToolBtn><ToolBtn><IcZone /></ToolBtn><ToolBtn><IcZone outline /></ToolBtn><HSep />
          <ToolBtn><IcPadSk /></ToolBtn><ToolBtn><IcViaSk /></ToolBtn><ToolBtn><IcTrackSk /></ToolBtn><ToolBtn><IcContrast /></ToolBtn><HSep />
          <ToolBtn on><IcLayers /></ToolBtn><ToolBtn><IcMicro /></ToolBtn><HSep />
        </div>
        <div className="flex w-[1650px] shrink-0 flex-col border-r border-white">
          <div className="flex">
            <BoardCanvas />
            <div className="flex h-[813px] w-[21px] flex-col items-center py-[7px]">
              <svg viewBox="0 0 12 8" className="h-2 w-3" fill="none"><path d="M1.500 6.500L6 2l4.500 4.500" stroke="#555" strokeWidth="1.800" /></svg>
              <div className="mt-[410px] h-[21px] w-[19px] bg-[#cdcdcd]" />
              <svg viewBox="0 0 12 8" className="mt-auto h-2 w-3" fill="none"><path d="M1.500 1.500L6 6l4.500-4.500" stroke="#555" strokeWidth="1.800" /></svg>
            </div>
          </div>
          <div className="flex h-[21px] items-center border-y border-white pl-[5px]">
            <svg viewBox="0 0 8 12" className="h-3 w-2" fill="none"><path d="M6.500 1.500L2 6l4.500 4.500" stroke="#555" strokeWidth="1.800" /></svg>
            <div className="ml-[866px] h-[19px] w-11 bg-[#cdcdcd]" />
            <svg viewBox="0 0 8 12" className="ml-[691px] h-3 w-2" fill="none"><path d="M1.500 1.500L6 6l-4.500 4.500" stroke="#555" strokeWidth="1.800" /></svg>
          </div>
        </div>
        <div className="flex w-9 shrink-0 flex-col pt-[3px]">
          <ToolBtn on><Ic><Cursor t="translate(-0.500 0)" /></Ic></ToolBtn><HSep /><ToolBtn><IcHighlight /></ToolBtn><ToolBtn><IcLocalRats /></ToolBtn><HSep />
          <ToolBtn><IcFootprint /></ToolBtn><ToolBtn><IcTrack /></ToolBtn><ToolBtn><IcVia /></ToolBtn><ToolBtn><IcAddZone /></ToolBtn><ToolBtn><IcKeepout /></ToolBtn><HSep />
          <ToolBtn><IcLine /></ToolBtn><ToolBtn><IcCircle /></ToolBtn><ToolBtn><IcArc /></ToolBtn><ToolBtn><IcPoly /></ToolBtn><ToolBtn><IcText /></ToolBtn><HSep />
          <ToolBtn><IcDim /></ToolBtn><ToolBtn><IcTarget /></ToolBtn><HSep /><ToolBtn><IcTrash /></ToolBtn><HSep />
          <ToolBtn><IcOrigin /></ToolBtn><ToolBtn><IcGridOrigin /></ToolBtn><ToolBtn><IcMeasure /></ToolBtn>
        </div>
        <div className="w-1 shrink-0 bg-[#dcdcdc]" />
        <LayersPanel />
      </div>

      <div className="flex h-[41px] shrink-0 border-t border-[#dadada] pl-[14px] pt-px text-black">
        {stats.map(([a, b, w]) => <div key={a} className={`flex flex-col leading-[20px] ${w}`}><span>{a}</span><span>{b}</span></div>)}
      </div>
      <div className="flex h-[28px] shrink-0 items-center whitespace-pre border-t border-[#d7d7d7] pt-px text-[14.2px] tracking-[-0.07px] text-black">
        <span className="w-[753px] pl-[2px]">R1 found</span>
        <span className="h-full w-[81px] border-l border-[#d7d7d7] pl-1 leading-[28px]">Z 6.03</span>
        <span className="h-full w-[219px] border-l border-[#d7d7d7] pl-1 leading-[28px]">X 95.798640  Y 65.450720</span>
        <span className="h-full w-[338px] border-l border-[#d7d7d7] pl-1 leading-[28px]">dx 95.798640  dy 65.450720  dist 116.022</span>
        <span className="h-full w-[250px] border-l border-[#d7d7d7] pl-1 leading-[28px]">grid X 0.002540  Y 0.002540</span>
        <span className="h-full w-[61px] border-l border-[#d7d7d7] pl-1 leading-[28px]">mm</span>
        <span className="h-full flex-1 border-l border-[#d7d7d7]" />
      </div>

      <ExportDialog />
    </div>
  );
}
